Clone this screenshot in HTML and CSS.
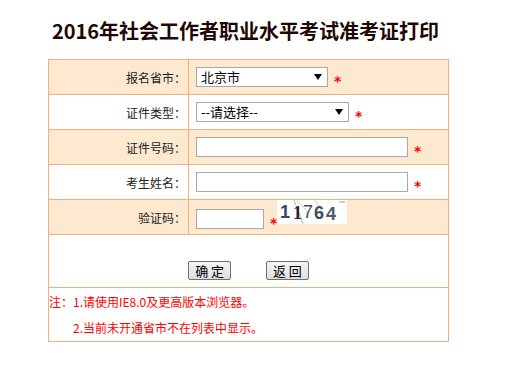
FILE: index.html
```html
<!doctype html>
<html>

<head>
  <meta charset="utf-8">
  <title>2016年社会工作者职业水平考试准考证打印</title>
  <link rel="stylesheet" href="styles.css">
</head>

<body>
  <div class="wrap">
    <h1>2016年社会工作者职业水平考试准考证打印</h1>
    <form>
      <table class="print-form">
        <tr class="odd">
          <td class="label">报名省市：</td>
          <td class="value">
            <div class="field">
              <span class="select-box city">
                <select name="province">
                  <option>北京市</option>
                </select>
              </span>
              <span class="star">*</span>
            </div>
          </td>
        </tr>
        <tr>
          <td class="label">证件类型：</td>
          <td class="value">
            <div class="field">
              <span class="select-box idtype">
                <select name="idtype">
                  <option>--请选择--</option>
                </select>
              </span>
              <span class="star">*</span>
            </div>
          </td>
        </tr>
        <tr class="odd">
          <td class="label">证件号码：</td>
          <td class="value">
            <div class="field">
              <input type="text" class="text" name="idno">
              <span class="star">*</span>
            </div>
          </td>
        </tr>
        <tr>
          <td class="label">考生姓名：</td>
          <td class="value">
            <div class="field">
              <input type="text" class="text" name="name">
              <span class="star">*</span>
            </div>
          </td>
        </tr>
        <tr class="odd">
          <td class="label">验证码：</td>
          <td class="value">
            <div class="field captcha-row">
              <input type="text" class="text code" name="code">
              <span class="star">*</span>
              <svg class="captcha" width="70" height="24" viewBox="0 0 70 24">
                <rect width="70" height="24" fill="#fff" />
                <line x1="17" y1="0" x2="26" y2="24" stroke="#9aa3ab" stroke-width="0.8" />
                <line x1="20" y1="1" x2="31" y2="12" stroke="#b5bcc2" stroke-width="0.7" />
                <line x1="37" y1="0" x2="45" y2="9" stroke="#a8b0b7" stroke-width="0.7" />
                <line x1="62" y1="2" x2="68" y2="2" stroke="#9aa3ab" stroke-width="1" />
                <text x="3" y="18" fill="#34495a" font-family="Liberation Sans" font-weight="bold" font-size="18">1</text>
                <text x="16" y="19" fill="#1c2630" font-family="Liberation Serif" font-weight="bold" font-size="18">1</text>
                <text x="26" y="18" fill="#3d4f5e" font-family="Liberation Sans" font-size="18">7</text>
                <text x="37" y="19" fill="#3a4d5d" font-family="Liberation Sans" font-weight="bold" font-size="18">6</text>
                <text x="49" y="20" fill="#4a5c6b" font-family="Liberation Sans" font-weight="bold" font-size="18">4</text>
              </svg>
            </div>
          </td>
        </tr>
        <tr>
          <td colspan="2" class="actions">
            <button type="button" class="btn">确 定</button>
            <button type="button" class="btn">返 回</button>
          </td>
        </tr>
        <tr>
          <td colspan="2" class="notes">
            <p>注：1.请使用IE8.0及更高版本浏览器。</p>
            <p class="indent">2.当前未开通省市不在列表中显示。</p>
          </td>
        </tr>
      </table>
    </form>
  </div>
</body>

</html>
```

FILE: styles.css
```css
body {
  margin: 0;
  font-family: "Noto Sans CJK SC", "Liberation Sans", sans-serif;
  font-size: 12px;
  color: #222;
  background-color: #fff;
}

.wrap {
  width: 401px;
  margin-left: 48px;
}

h1 {
  margin: 0;
  padding: 16px 6px 13px 0;
  line-height: 30px;
  font-size: 20px;
  font-weight: bold;
  text-align: center;
  color: #1f0703;
}

form {
  margin: 0;
}

.print-form {
  width: 401px;
  border-collapse: collapse;
  table-layout: fixed;
}

.print-form td {
  border: 1px solid #f2b07e;
  height: 34px;
  padding: 0;
}

.print-form tr.odd td {
  background-color: #fde9d0;
}

.print-form td.label {
  width: 137px;
  text-align: right;
  padding-right: 2px;
}

.print-form td.value {
  padding-left: 7px;
}

.field {
  display: flex;
  align-items: center;
}

/* 必填星号 */
.star {
  color: #f00;
  font-family: "DejaVu Sans", sans-serif;
  font-size: 14px;
  font-weight: bold;
  margin-left: 6px;
  line-height: 14px;
  height: 14px;
  margin-top: 7px;
}

.select-box {
  position: relative;
  display: inline-block;
}

.select-box.city {
  width: 132px;
}

.select-box.idtype {
  width: 153px;
}

.select-box select {
  appearance: none;
  -webkit-appearance: none;
  display: block;
  width: 100%;
  height: 20px;
  margin: 0;
  padding: 0 0 0 4px;
  border: 1px solid #a9a9a9;
  border-radius: 0;
  background-color: #fff;
  font-family: inherit;
  font-size: 13px;
  line-height: 18px;
  color: #000;
}

/* 下拉箭头 */
.select-box::after {
  content: "";
  position: absolute;
  right: 6px;
  top: 7px;
  border-left: 4px solid transparent;
  border-right: 4px solid transparent;
  border-top: 6px solid #000;
  pointer-events: none;
}

.text {
  width: 212px;
  height: 20px;
  margin: 0;
  padding: 0 3px;
  box-sizing: border-box;
  border: 1px solid #a9a9a9;
  background-color: #fff;
  font-family: inherit;
  font-size: 13px;
}

.captcha-row {
  align-items: flex-start;
  height: 34px;
}

.text.code {
  width: 68px;
  margin-top: 9px;
}

.captcha-row .star {
  margin-left: 6px;
  margin-top: 16px;
}

.captcha {
  display: block;
  margin-top: 0;
  margin-left: 0;
}

.print-form td.actions {
  height: 53px;
  text-align: center;
  vertical-align: bottom;
  padding-bottom: 7px;
  box-sizing: border-box;
}

.btn {
  width: 43px;
  height: 19px;
  margin: 0 16px;
  padding: 0;
  border: 1px solid #707070;
  border-radius: 2px;
  background: linear-gradient(#f4f4f4, #dedede);
  font-family: inherit;
  font-size: 13px;
  line-height: 17px;
  color: #000;
  cursor: pointer;
}

.print-form td.notes {
  height: 52px;
  vertical-align: top;
  padding-top: 1px;
  box-sizing: border-box;
  color: #f00;
}

.notes p {
  margin: 0;
  line-height: 26px;
  font-size: 12px;
}

.notes p.indent {
  padding-left: 24px;
}
```
